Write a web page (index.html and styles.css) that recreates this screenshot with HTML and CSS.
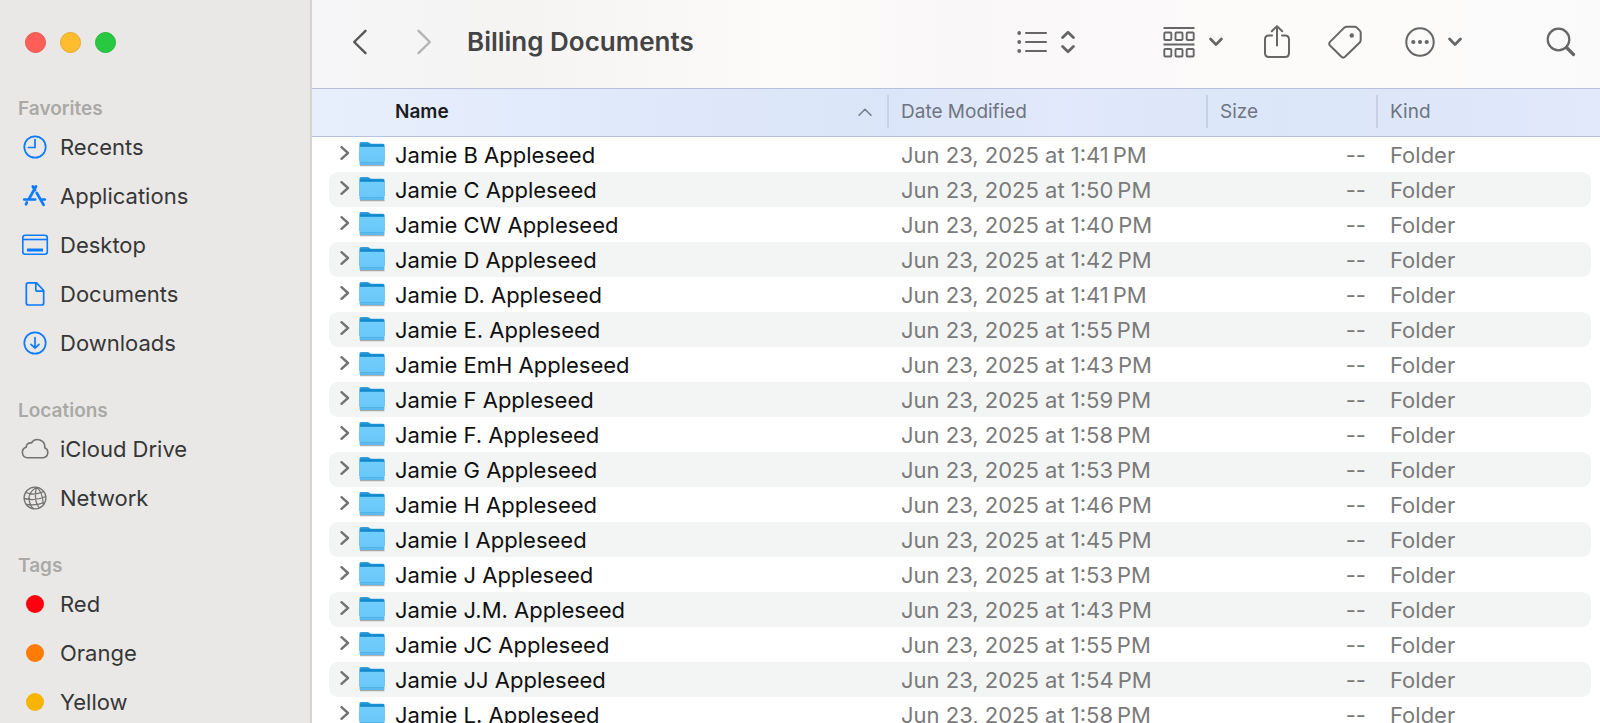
FILE: index.html
```html
<!DOCTYPE html>
<html lang="en">
<head>
<meta charset="utf-8">
<title>Billing Documents</title>
<link rel="stylesheet" href="styles.css">
</head>
<body>
<svg class="sprite" width="0" height="0" aria-hidden="true">
  <defs>
    <linearGradient id="folder-front" x1="0" y1="0" x2="0" y2="1"><stop offset="0" stop-color="#72cdfb"/><stop offset=".8" stop-color="#6ac8fa"/><stop offset="1" stop-color="#55b5ea"/></linearGradient>
    <linearGradient id="folder-back" x1="0" y1="0" x2="0" y2="1"><stop offset="0" stop-color="#3aa3dc"/><stop offset=".2" stop-color="#0c86cc"/></linearGradient>
    <symbol id="folder" viewBox="0 0 26 26"><path d="M1 24.500h24.500" stroke="#000" stroke-opacity=".3" stroke-width="1.500"/><path d="M.5 2.500Q.5 1 2 1h6.500q1 0 1.800.7l.8.6q.7.500 1.600.500H24q1.500 0 1.500 1.500V20H.5z" fill="url(#folder-back)"/><path d="M.5 7Q.5 5.700 1.800 5.700H24.200q1.300 0 1.300 1.300V22.500q0 1.500-1.500 1.500H2Q.5 24 .5 22.500z" fill="url(#folder-front)"/><path d="M1 21.500h24" stroke="#4dadde" stroke-width=".8"/></symbol>
    <symbol id="disclose" viewBox="0 0 10 14"><path d="M1.500 1.200L8 7l-6.500 5.800" fill="none" stroke="#737373" stroke-width="2.400" stroke-linecap="round" stroke-linejoin="round"/></symbol>
    <symbol id="chevron" viewBox="0 0 14 10"><path d="M1.600 2L7 7.600 12.400 2" fill="none" stroke="currentColor" stroke-width="2.800" stroke-linecap="round" stroke-linejoin="round"/></symbol>
  </defs>
</svg>
<div class="window">
  <aside class="sidebar">
    <div class="lights">
      <button class="light light-close" aria-label="Close"></button>
      <button class="light light-min" aria-label="Minimize"></button>
      <button class="light light-zoom" aria-label="Zoom"></button>
    </div>
    <nav class="groups" aria-label="Sidebar">
      <section>
        <h2 class="group-title">Favorites</h2>
        <a class="item" href="#recents"><svg class="item-icon" viewBox="0 0 28 28" fill="none" stroke="#0a7aff" stroke-width="1.700"><circle cx="14" cy="14" r="10.700"/><path d="M14 6.500v8H7.500" stroke-linejoin="round" stroke-linecap="round"/></svg>Recents</a>
        <a class="item" href="#applications"><svg class="item-icon" viewBox="0 0 28 28" fill="none" stroke="#0a7aff" stroke-width="2.700" stroke-linecap="round"><path d="M15 4.500L8.200 16.500M11.800 4.500l2.200 3.500M15.800 11l6.800 11.800M5.800 20.500l-.8 1.800M3.200 17.500h11M19.800 17.500h4"/></svg>Applications</a>
        <a class="item" href="#desktop"><svg class="item-icon" viewBox="0 0 28 28" fill="none" stroke="#0a7aff" stroke-width="1.600"><rect x="1.800" y="4.300" width="24.500" height="19" rx="2.500"/><path d="M2 8.500h24"/><rect x="6" y="17.500" width="16" height="3" fill="#0a7aff" stroke="none"/></svg>Desktop</a>
        <a class="item" href="#documents"><svg class="item-icon" viewBox="0 0 28 28" fill="none" stroke="#0a7aff" stroke-width="1.700" stroke-linejoin="round"><path d="M15.500 2.800H7.300q-2 0-2 2V23q0 2 2 2h13.400q2 0 2-2V10.500L15.500 2.800zM14.800 3.200v6.300q0 1.700 1.700 1.700h6"/></svg>Documents</a>
        <a class="item" href="#downloads"><svg class="item-icon" viewBox="0 0 28 28" fill="none" stroke="#0a7aff" stroke-width="1.700" stroke-linecap="round" stroke-linejoin="round"><circle cx="14" cy="14" r="10.700"/><path d="M14 8.500v10.500M10 15.300l4 3.800 4-3.800"/></svg>Downloads</a>
      </section>
      <section>
        <h2 class="group-title">Locations</h2>
        <a class="item" href="#icloud"><svg class="item-icon" viewBox="0 0 28 28" fill="none" stroke="#737373" stroke-width="1.600" stroke-linejoin="round"><path d="M6.500 22.700a5.300 5.300 0 0 1-1.200-10.400 4 4 0 0 1 5-4.300 7.300 7.300 0 0 1 13.400 4.800 5.200 5.200 0 0 1-1.500 9.900z"/></svg>iCloud Drive</a>
        <a class="item" href="#network"><svg class="item-icon" viewBox="0 0 28 28" fill="none" stroke="#737373" stroke-width="1.300"><circle cx="14" cy="14" r="10.900"/><path d="M15.500 3.200Q14 8 14.500 14t4 10M15.500 3.200Q6.500 9 8.200 16.500T13 24.800M15.500 3.200Q21.500 7 22.300 20.500M4.800 8.500Q13 12 22.800 7.500M3.200 14.500Q14 17.500 24.800 12.500M5.500 20.500Q15 22 23 18.500"/></svg>Network</a>
      </section>
      <section>
        <h2 class="group-title">Tags</h2>
        <a class="item" href="#red"><span class="tag tag-red"></span>Red</a>
        <a class="item" href="#orange"><span class="tag tag-orange"></span>Orange</a>
        <a class="item" href="#yellow"><span class="tag tag-yellow"></span>Yellow</a>
      </section>
    </nav>
  </aside>
  <main class="content">
    <header class="toolbar">
      <div class="history">
        <button class="tool" aria-label="Back"><svg width="16" height="26" viewBox="0 0 16 26"><path d="M13.500 1.800L2.200 13l11.300 11.200" fill="none" stroke="#575757" stroke-width="2.400" stroke-linecap="round" stroke-linejoin="round"/></svg></button>
        <button class="tool" aria-label="Forward"><svg width="16" height="26" viewBox="0 0 16 26"><path d="M2.500 1.800L13.800 13 2.500 24.200" fill="none" stroke="#b4b4b3" stroke-width="2.400" stroke-linecap="round" stroke-linejoin="round"/></svg></button>
      </div>
      <h1 class="title">Billing Documents</h1>
      <div class="tools">
        <button class="tool view" aria-label="View as list">
          <svg width="30" height="24" viewBox="0 0 30 24" fill="#666"><circle cx="2.200" cy="3" r="1.900"/><circle cx="2.200" cy="12" r="1.900"/><circle cx="2.200" cy="21" r="1.900"/><path d="M9 3h20M9 12h20M9 21h20" stroke="#666" stroke-width="2" stroke-linecap="round"/></svg>
          <svg width="14" height="24" viewBox="0 0 14 24" fill="none" stroke="#666" stroke-width="2.800" stroke-linecap="round" stroke-linejoin="round"><path d="M1.600 7.500L7 2.200l5.400 5.300M1.600 16.500L7 21.800l5.400-5.300"/></svg>
        </button>
        <button class="tool group" aria-label="Group items">
          <svg width="32" height="32" viewBox="0 0 32 32" fill="none" stroke="#666" stroke-width="1.900"><path d="M.5 2h31M.5 18.500h31"/><rect x="1.300" y="6.500" width="7" height="7.500" rx="1"/><rect x="12.500" y="6.500" width="7" height="7.500" rx="1"/><rect x="23.700" y="6.500" width="7" height="7.500" rx="1"/><rect x="1.300" y="23" width="7" height="7.500" rx="1"/><rect x="12.500" y="23" width="7" height="7.500" rx="1"/><rect x="23.700" y="23" width="7" height="7.500" rx="1"/></svg>
          <svg width="14" height="10"><use href="#chevron"/></svg>
        </button>
        <button class="tool share" aria-label="Share"><svg width="26" height="34" viewBox="0 0 26 34" fill="none" stroke="#666" stroke-width="2" stroke-linecap="round" stroke-linejoin="round"><path d="M8 10.500H5q-4 0-4 4V28q0 4 4 4h16q4 0 4-4V14.500q0-4-4-4h-3M13 20.500V1.300M7.800 6.300L13 1.100l5.200 5.200"/></svg></button>
        <button class="tool label" aria-label="Edit tags"><svg width="34" height="34" viewBox="0 0 34 34" fill="none" stroke="#666" stroke-width="2" stroke-linejoin="round"><path d="M19 1.700h7.500q1.400 0 2.300.9l3 3q.9.900.9 2.200V15q0 1.600-1.200 2.800L17 31.800q-1.900 1.600-3.600 0L2 20.500q-1.600-1.800 0-3.600L16 2.900q1.300-1.200 3-1.200z"/><circle cx="23.800" cy="10.500" r="2.200" fill="#666" stroke="none"/></svg></button>
        <button class="tool more" aria-label="More actions">
          <svg width="30" height="30" viewBox="0 0 30 30" fill="#666"><circle cx="15" cy="15" r="13.700" fill="none" stroke="#666" stroke-width="2"/><circle cx="8.300" cy="15" r="2.100"/><circle cx="15" cy="15" r="2.100"/><circle cx="21.700" cy="15" r="2.100"/></svg>
          <svg width="14" height="10"><use href="#chevron"/></svg>
        </button>
        <button class="tool" aria-label="Search"><svg width="30" height="30" viewBox="0 0 30 30" fill="none" stroke="#666"><circle cx="12.500" cy="12.500" r="10.800" stroke-width="2.200"/><path d="M20.500 20.500l7 7" stroke-width="3.200" stroke-linecap="round"/></svg></button>
      </div>
    </header>
    <table class="files">
      <thead>
        <tr class="cols">
          <th class="col col-name" aria-sort="ascending"><button class="sort">Name</button><svg width="14" height="8" viewBox="0 0 14 8"><path d="M1 7.200l6-6 6 6" fill="none" stroke="#747b87" stroke-width="1.500" stroke-linecap="round" stroke-linejoin="round"/></svg></th>
          <th class="col"><button class="sort">Date Modified</button></th>
          <th class="col"><button class="sort">Size</button></th>
          <th class="col"><button class="sort">Kind</button></th>
        </tr>
      </thead>
      <tbody>
        <tr class="row"><td class="name"><button class="open" aria-label="Expand"><svg width="10" height="14"><use href="#disclose"/></svg></button><svg width="26" height="26"><use href="#folder"/></svg>Jamie B Appleseed</td><td class="date">Jun 23, 2025 at 1:41&#8239;PM</td><td class="size">--</td><td class="kind">Folder</td></tr>
        <tr class="row"><td class="name"><button class="open" aria-label="Expand"><svg width="10" height="14"><use href="#disclose"/></svg></button><svg width="26" height="26"><use href="#folder"/></svg>Jamie C Appleseed</td><td class="date">Jun 23, 2025 at 1:50&#8239;PM</td><td class="size">--</td><td class="kind">Folder</td></tr>
        <tr class="row"><td class="name"><button class="open" aria-label="Expand"><svg width="10" height="14"><use href="#disclose"/></svg></button><svg width="26" height="26"><use href="#folder"/></svg>Jamie CW Appleseed</td><td class="date">Jun 23, 2025 at 1:40&#8239;PM</td><td class="size">--</td><td class="kind">Folder</td></tr>
        <tr class="row"><td class="name"><button class="open" aria-label="Expand"><svg width="10" height="14"><use href="#disclose"/></svg></button><svg width="26" height="26"><use href="#folder"/></svg>Jamie D Appleseed</td><td class="date">Jun 23, 2025 at 1:42&#8239;PM</td><td class="size">--</td><td class="kind">Folder</td></tr>
        <tr class="row"><td class="name"><button class="open" aria-label="Expand"><svg width="10" height="14"><use href="#disclose"/></svg></button><svg width="26" height="26"><use href="#folder"/></svg>Jamie D. Appleseed</td><td class="date">Jun 23, 2025 at 1:41&#8239;PM</td><td class="size">--</td><td class="kind">Folder</td></tr>
        <tr class="row"><td class="name"><button class="open" aria-label="Expand"><svg width="10" height="14"><use href="#disclose"/></svg></button><svg width="26" height="26"><use href="#folder"/></svg>Jamie E. Appleseed</td><td class="date">Jun 23, 2025 at 1:55&#8239;PM</td><td class="size">--</td><td class="kind">Folder</td></tr>
        <tr class="row"><td class="name"><button class="open" aria-label="Expand"><svg width="10" height="14"><use href="#disclose"/></svg></button><svg width="26" height="26"><use href="#folder"/></svg>Jamie EmH Appleseed</td><td class="date">Jun 23, 2025 at 1:43&#8239;PM</td><td class="size">--</td><td class="kind">Folder</td></tr>
        <tr class="row"><td class="name"><button class="open" aria-label="Expand"><svg width="10" height="14"><use href="#disclose"/></svg></button><svg width="26" height="26"><use href="#folder"/></svg>Jamie F Appleseed</td><td class="date">Jun 23, 2025 at 1:59&#8239;PM</td><td class="size">--</td><td class="kind">Folder</td></tr>
        <tr class="row"><td class="name"><button class="open" aria-label="Expand"><svg width="10" height="14"><use href="#disclose"/></svg></button><svg width="26" height="26"><use href="#folder"/></svg>Jamie F. Appleseed</td><td class="date">Jun 23, 2025 at 1:58&#8239;PM</td><td class="size">--</td><td class="kind">Folder</td></tr>
        <tr class="row"><td class="name"><button class="open" aria-label="Expand"><svg width="10" height="14"><use href="#disclose"/></svg></button><svg width="26" height="26"><use href="#folder"/></svg>Jamie G Appleseed</td><td class="date">Jun 23, 2025 at 1:53&#8239;PM</td><td class="size">--</td><td class="kind">Folder</td></tr>
        <tr class="row"><td class="name"><button class="open" aria-label="Expand"><svg width="10" height="14"><use href="#disclose"/></svg></button><svg width="26" height="26"><use href="#folder"/></svg>Jamie H Appleseed</td><td class="date">Jun 23, 2025 at 1:46&#8239;PM</td><td class="size">--</td><td class="kind">Folder</td></tr>
        <tr class="row"><td class="name"><button class="open" aria-label="Expand"><svg width="10" height="14"><use href="#disclose"/></svg></button><svg width="26" height="26"><use href="#folder"/></svg>Jamie I Appleseed</td><td class="date">Jun 23, 2025 at 1:45&#8239;PM</td><td class="size">--</td><td class="kind">Folder</td></tr>
        <tr class="row"><td class="name"><button class="open" aria-label="Expand"><svg width="10" height="14"><use href="#disclose"/></svg></button><svg width="26" height="26"><use href="#folder"/></svg>Jamie J Appleseed</td><td class="date">Jun 23, 2025 at 1:53&#8239;PM</td><td class="size">--</td><td class="kind">Folder</td></tr>
        <tr class="row"><td class="name"><button class="open" aria-label="Expand"><svg width="10" height="14"><use href="#disclose"/></svg></button><svg width="26" height="26"><use href="#folder"/></svg>Jamie J.M. Appleseed</td><td class="date">Jun 23, 2025 at 1:43&#8239;PM</td><td class="size">--</td><td class="kind">Folder</td></tr>
        <tr class="row"><td class="name"><button class="open" aria-label="Expand"><svg width="10" height="14"><use href="#disclose"/></svg></button><svg width="26" height="26"><use href="#folder"/></svg>Jamie JC Appleseed</td><td class="date">Jun 23, 2025 at 1:55&#8239;PM</td><td class="size">--</td><td class="kind">Folder</td></tr>
        <tr class="row"><td class="name"><button class="open" aria-label="Expand"><svg width="10" height="14"><use href="#disclose"/></svg></button><svg width="26" height="26"><use href="#folder"/></svg>Jamie JJ Appleseed</td><td class="date">Jun 23, 2025 at 1:54&#8239;PM</td><td class="size">--</td><td class="kind">Folder</td></tr>
        <tr class="row"><td class="name"><button class="open" aria-label="Expand"><svg width="10" height="14"><use href="#disclose"/></svg></button><svg width="26" height="26"><use href="#folder"/></svg>Jamie L. Appleseed</td><td class="date">Jun 23, 2025 at 1:58&#8239;PM</td><td class="size">--</td><td class="kind">Folder</td></tr>
      </tbody>
    </table>
  </main>
</div>
</body>
</html>
```

FILE: styles.css
```css
* { box-sizing: border-box; }

body {
  margin: 0;
  font-family: Inter, "Liberation Sans", sans-serif;
  font-size: 22px;
  background: #fff;
}

button {
  margin: 0;
  padding: 0;
  border: 0;
  background: none;
  color: inherit;
  font: inherit;
}

svg { display: block; flex: none; }

.sprite { position: absolute; }

.window {
  display: flex;
  height: 100vh;
  overflow: hidden;
}

/* Sidebar */
.sidebar {
  flex: none;
  width: 312px;
  overflow: hidden;
  background: #e9e8e6;
  border-right: 2px solid #d6d5d4;
  color: #363636;
}

.lights {
  display: flex;
  gap: 14px;
  padding: 32px 25px 0;
  height: 92px;
}

.light {
  width: 21px;
  height: 21px;
  border-radius: 50%;
}

.light-close { background: #ff5f57; border: 1px solid #ec5550; }
.light-min { background: #febc2e; border: 1px solid #e9aa27; }
.light-zoom { background: #28c840; border: 1px solid #24b538; }

.groups {
  display: flex;
  flex-direction: column;
  gap: 27px;
}

.group-title {
  margin: 0;
  padding: 3px 0 0 18px;
  font-size: 19px;
  font-weight: 600;
  line-height: 27px;
  color: #aaa9a7;
}

.item {
  display: flex;
  align-items: center;
  gap: 11px;
  height: 49px;
  padding-left: 21px;
  color: inherit;
  text-decoration: none;
}

.item-icon { width: 28px; height: 28px; }

.tag {
  width: 18px;
  height: 18px;
  margin: 0 5px;
  border-radius: 50%;
}

.tag-red { background: #ff000f; }
.tag-orange { background: #ff7c00; }
.tag-yellow { background: #f7b500; }

/* Toolbar */
.content {
  flex: 1;
  min-width: 0;
  overflow: hidden;
}

.toolbar {
  display: flex;
  align-items: center;
  height: 88px;
  padding: 0 24px 5px 40px;
  background: linear-gradient(90deg, #f6f6f8, #f5f4f3 15%, #fcfbf9 38%, #f9f7f8 50%, #fcfbfa 75%, #fbfafa);
  color: #666;
}

.history {
  display: flex;
  gap: 48px;
}

.title {
  margin: 0 0 0 35px;
  font-size: 26px;
  font-weight: 600;
  line-height: 32px;
  white-space: nowrap;
  color: #444;
}

.tools {
  display: flex;
  align-items: center;
  margin-left: auto;
}

.tool {
  display: flex;
  align-items: center;
  gap: 14px;
}

.view { margin-right: 88px; }
.group { margin-right: 41px; }
.share { margin-right: 38px; }
.label { margin-right: 43px; }
.more { margin-right: 84px; gap: 13px; }

/* File list */
.files,
.files thead,
.files tbody { display: block; }

.cols,
.row {
  display: grid;
  grid-template-columns: minmax(200px, 1fr) 319px 170px 215px;
}

.cols {
  height: 49px;
  padding: 6px 9px 8px 17px;
  border-top: 1px solid #b7c0da;
  border-bottom: 1px solid #b9c3e0;
  background: linear-gradient(90deg, #e8effc, #dfe9fa 25%, #dbe5f9 45%, #e1e9fb 58%, #dbe6f9 75%, #e1e9fa);
  color: #6f7580;
  font-size: 19px;
}

.col {
  display: flex;
  align-items: center;
  padding: 0 0 0 12px;
  border-left: 2px solid #c7d1e4;
  font-weight: 400;
}

.col-name {
  justify-content: space-between;
  padding-left: 66px;
  padding-right: 15px;
  border-left: 0;
}

.col-name .sort {
  font-weight: 600;
  color: #1b1c1e;
}

.row {
  height: 35px;
  margin: 0 9px 0 17px;
  border-radius: 9px;
  line-height: 36px;
  white-space: nowrap;
  color: #7a7a7a;
}

.row:nth-child(even) { background: #f3f5f4; }

.row td { padding: 0; }

.row .name {
  display: flex;
  align-items: center;
  padding-left: 11px;
  color: #101010;
}

.open { margin: 0 9px 4px 0; }

.name > svg { margin: 0 10px 2px 0; }

.row .date,
.row .kind { padding-left: 14px; }

.row .size {
  padding-right: 10px;
  text-align: right;
}
```
